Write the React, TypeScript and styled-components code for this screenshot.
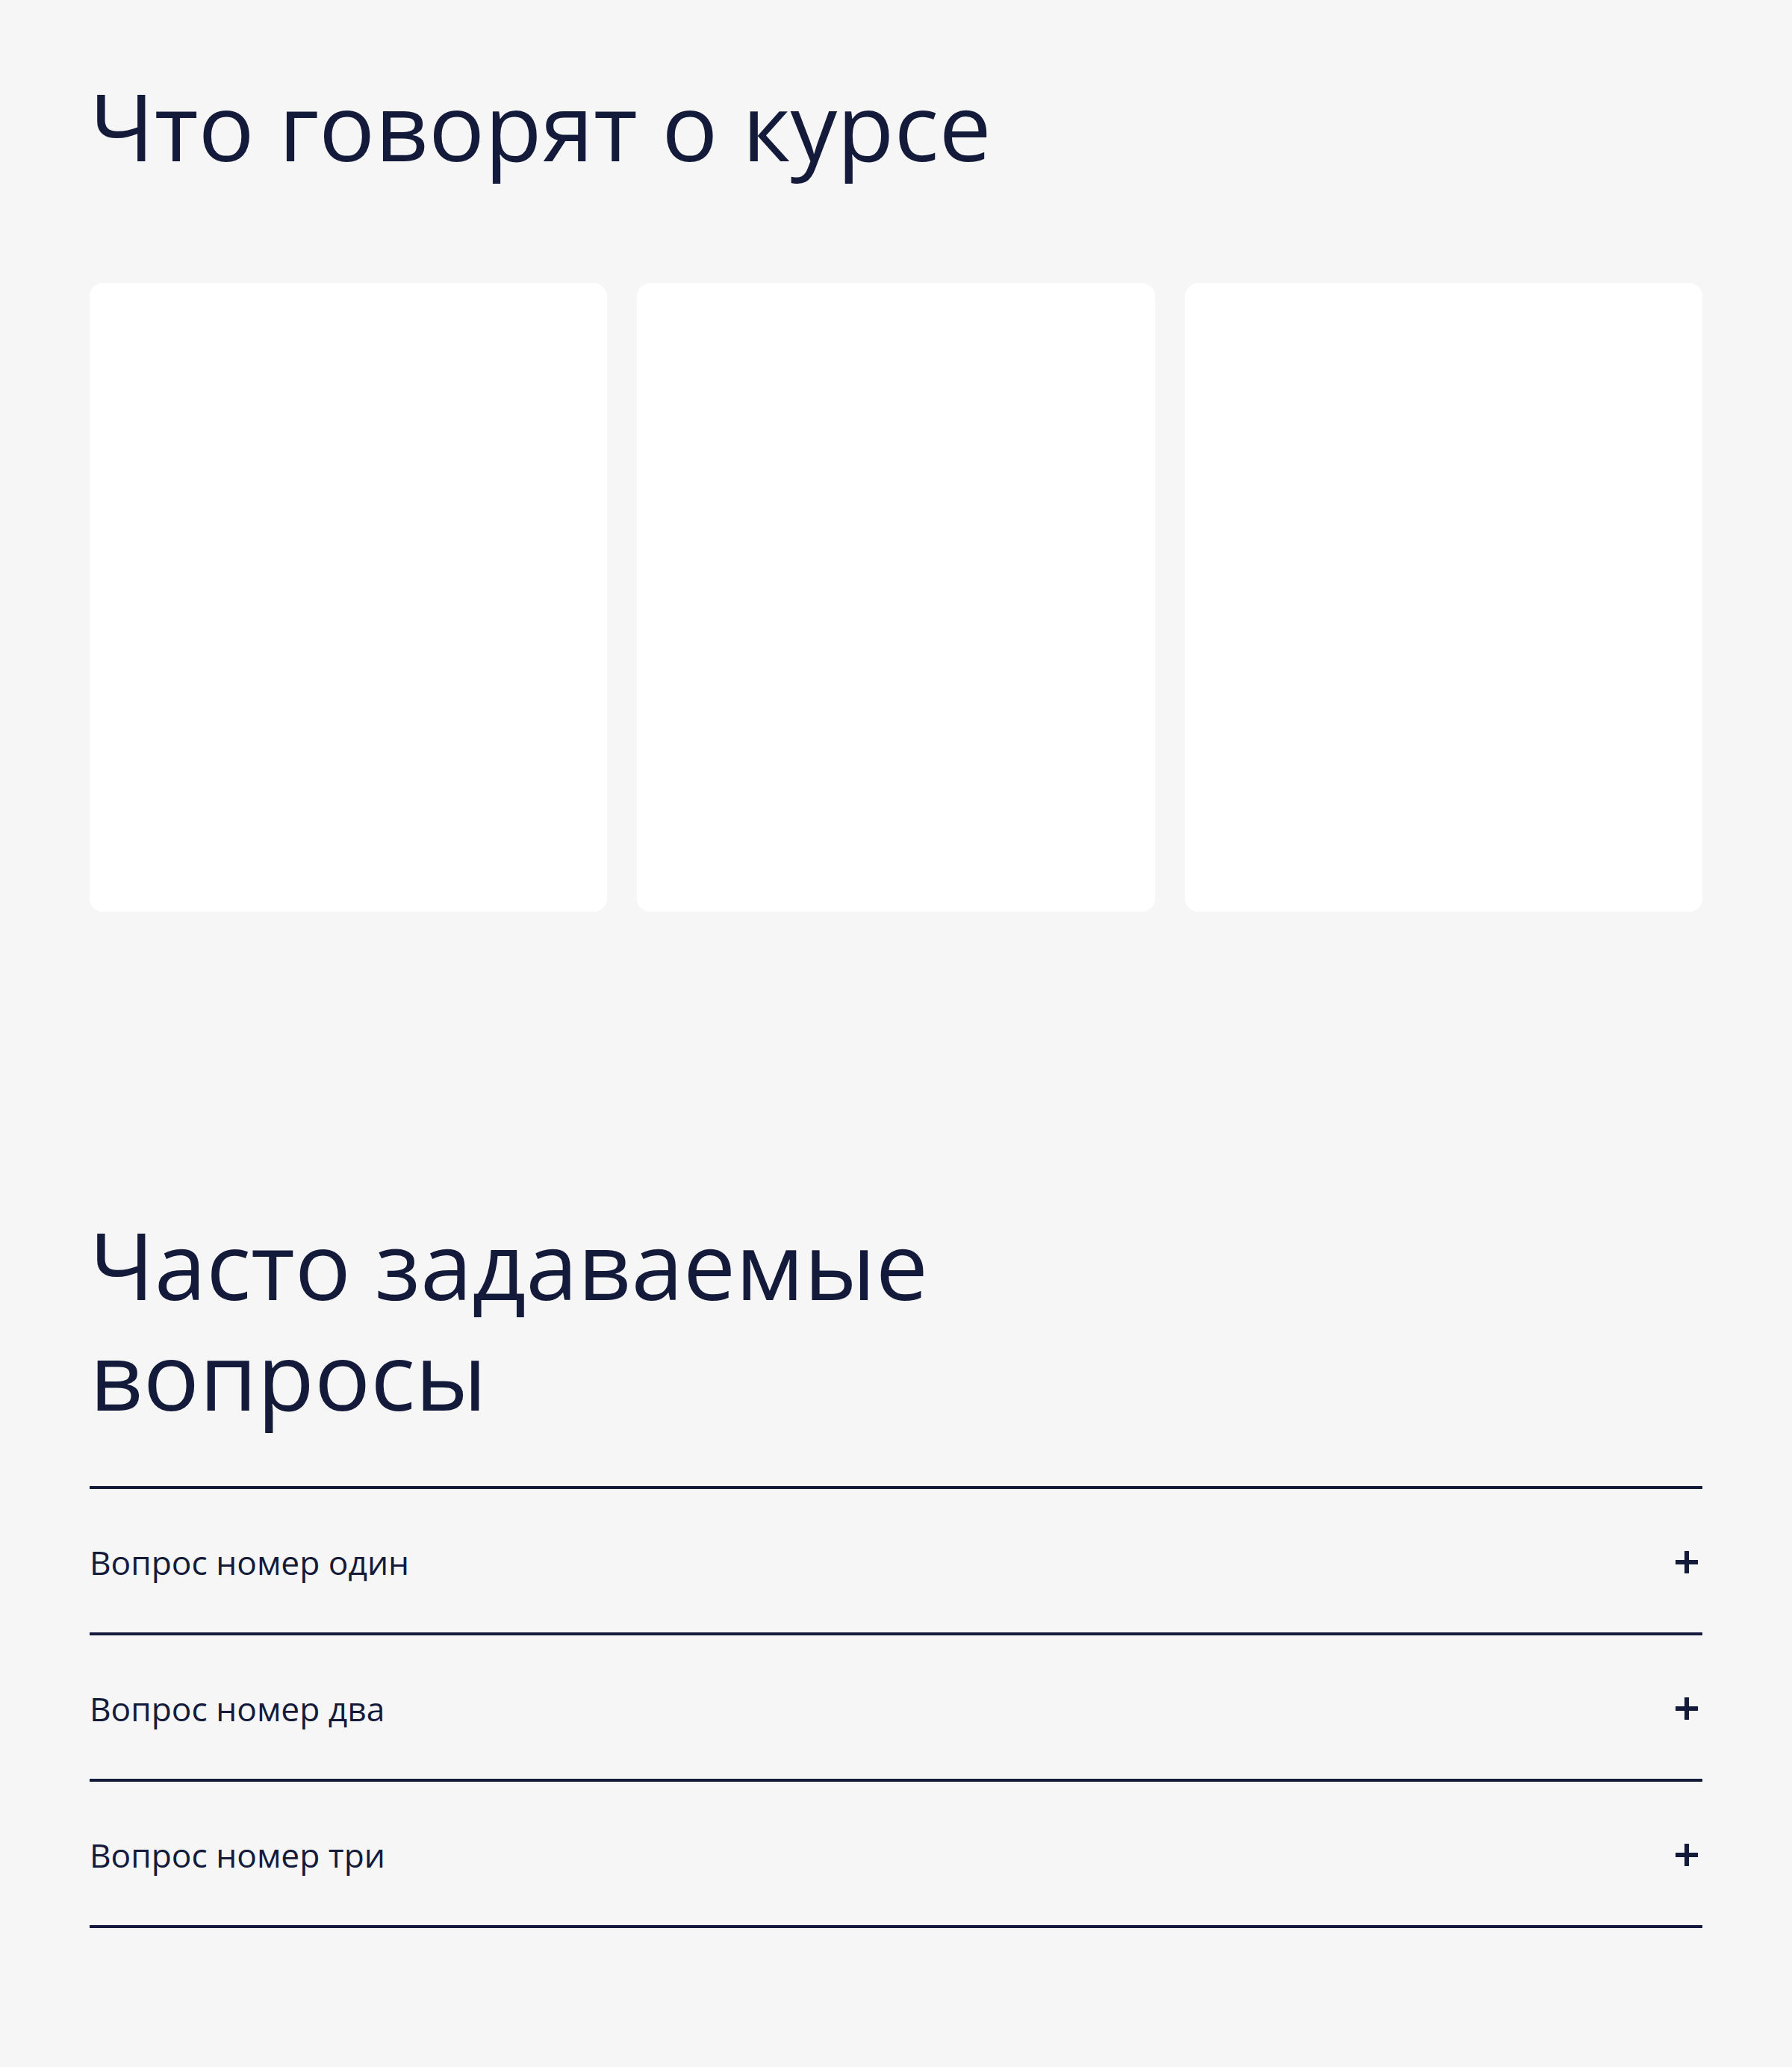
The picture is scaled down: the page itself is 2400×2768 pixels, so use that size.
import styled, { createGlobalStyle } from 'styled-components';

const GlobalStyle = createGlobalStyle`
  html, body {
    margin: 0;
    padding: 0;
    background: #f6f6f6;
  }
  body {
    font-family: 'Open Sans', 'Noto Sans', sans-serif;
    color: #141b3a;
  }
  * {
    box-sizing: border-box;
  }
`;

const questions = ['Вопрос номер один', 'Вопрос номер два', 'Вопрос номер три'];

function PlusIcon() {
  return (
    <svg width="32" height="32" viewBox="0 0 32 32" aria-hidden="true">
      <path d="M16 1V31M1 16H31" stroke="currentColor" strokeWidth="6" fill="none" />
    </svg>
  );
}

export default function App() {
  return (
    <>
      <GlobalStyle />
      <Page>
        <Reviews>
          <Title>Что говорят о курсе</Title>
          <CardGrid>
            <Card />
            <Card />
            <Card />
          </CardGrid>
        </Reviews>

        <Faq>
          <Title>Часто задаваемые вопросы</Title>
          <QuestionList>
            {questions.map((q) => (
              <QuestionItem key={q}>
                <QuestionText>{q}</QuestionText>
                <Toggle type="button" aria-label="Открыть">
                  <PlusIcon />
                </Toggle>
              </QuestionItem>
            ))}
          </QuestionList>
        </Faq>
      </Page>
    </>
  );
}

const Page = styled.main`
  width: 100%;
  padding: 0 120px;
`;

const Reviews = styled.section`
  padding-top: 94px;
  padding-bottom: 200px;
`;

const Faq = styled.section`
  padding-top: 198px;
  padding-bottom: 184px;

  h2 {
    margin-bottom: 75px;
  }
`;

const Title = styled.h2`
  margin: 0 0 137px;
  max-width: 1300px;
  font-size: 125px;
  line-height: 148px;
  font-weight: 400;
  color: #141b3a;
`;

const CardGrid = styled.div`
  display: grid;
  grid-template-columns: repeat(3, 1fr);
  gap: 40px;
`;

const Card = styled.div`
  height: 842px;
  background: #ffffff;
  border-radius: 18px;
`;

const QuestionList = styled.ul`
  margin: 0;
  padding: 0;
  list-style: none;
  border-top: 4px solid #141b3a;
`;

const QuestionItem = styled.li`
  display: flex;
  align-items: center;
  justify-content: space-between;
  padding: 72px 0 68px;
  border-bottom: 4px solid #141b3a;
`;

const QuestionText = styled.span`
  font-size: 44.3px;
  line-height: 52px;
  font-weight: 400;
`;

const Toggle = styled.button`
  display: flex;
  align-items: center;
  justify-content: center;
  width: 32px;
  height: 32px;
  margin-right: 5px;
  padding: 0;
  border: none;
  background: none;
  color: #141b3a;
  cursor: pointer;
`;
